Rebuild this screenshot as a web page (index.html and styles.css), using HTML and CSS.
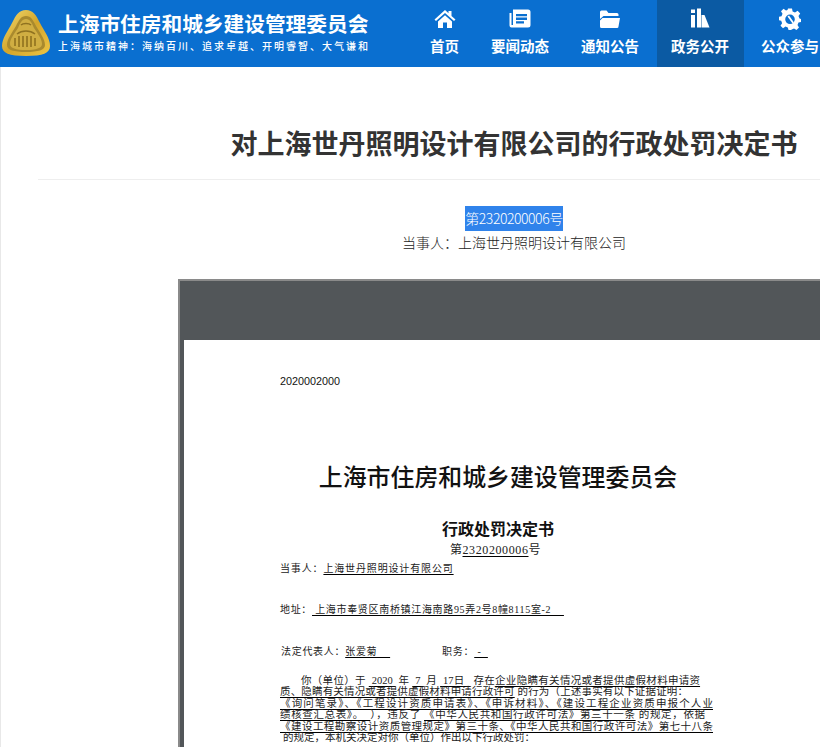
FILE: index.html
```html
<!DOCTYPE html>
<html lang="zh-CN">
<head>
<meta charset="utf-8">
<title>对上海世丹照明设计有限公司的行政处罚决定书</title>
<link rel="stylesheet" href="styles.css">
</head>
<body>
<div class="page">
  <header class="header">
    <div class="brand">
      <svg class="logo" width="50" height="50" viewBox="0 0 50 50">
        <defs>
          <linearGradient id="gold" x1="0" y1="0" x2="1" y2="1">
            <stop offset="0" stop-color="#f3dc72"/>
            <stop offset="0.5" stop-color="#d2a52c"/>
            <stop offset="1" stop-color="#eec544"/>
          </linearGradient>
        </defs>
        <path d="M25 1C32 1 35 6 39 14C43 22 49 29 49 37C49 44 42 47 25 47C8 47 1 44 1 37C1 29 7 22 11 14C15 6 18 1 25 1Z" fill="url(#gold)"/>
        <path d="M25 7C30 7 32 11 35 17C39 24 44 30 44 36C44 41 37 43 25 43C13 43 6 41 6 36C6 30 11 24 15 17C18 11 20 7 25 7Z" fill="#a98a2e"/>
        <path d="M25 10C29 10 31 14 33 19C37 25 41 30 41 35C41 39 35 41 25 41C15 41 9 39 9 35C9 30 13 25 17 19C19 14 21 10 25 10Z" fill="#d0ae42"/>
        <path d="M16 25C21 21 29 21 34 25" fill="none" stroke="#8f7220" stroke-width="1.500"/>
        <path d="M14 37V29M18 38V27M22 38V27M26 38V27M30 38V27M34 37V29" stroke="#87691a" stroke-width="1.400"/>
        <path d="M20 16C22 14 28 14 30 16" fill="none" stroke="#8f7220" stroke-width="1.500"/>
      </svg>
      <div class="brand-text">
        <div class="brand-name">上海市住房和城乡建设管理委员会</div>
        <div class="brand-sub">上海城市精神：海纳百川、追求卓越、开明睿智、大气谦和</div>
      </div>
    </div>
    <nav class="nav">
      <a class="nav-item">
        <svg class="nav-icon" width="24" height="24" viewBox="0 0 24 24"><path d="M12 3L1.500 12.500L3 14L12 6L21 14L22.500 12.500L18.500 9V4H15.500V6.300Z M5 14.500L12 8.300L19 14.500V21H14V15.500H10V21H5Z" fill="#fff"/></svg>
        <span>首页</span>
      </a>
      <a class="nav-item">
        <svg class="nav-icon" width="24" height="24" viewBox="0 0 24 24"><path d="M5 2.500H20A2.500 2.500 0 0 1 22.500 5V18A2.500 2.500 0 0 1 20 20.500H3.500A2 2 0 0 1 1.500 18.500V6H3.500V18H5Z" fill="#fff"/><path d="M8 7H19V9.300H8ZM8 10.600H19V12.900H8ZM8 14.200H16V16.500H8Z" fill="#0a6fd0"/></svg>
        <span>要闻动态</span>
      </a>
      <a class="nav-item">
        <svg class="nav-icon" width="24" height="24" viewBox="0 0 24 24"><path d="M2 5A1.500 1.500 0 0 1 3.500 3.500H8.500L10.500 6H19A1.500 1.500 0 0 1 20.500 7.500V9H5.500L2 12Z" fill="#fff"/><path d="M4.500 11H22L20.500 19.500A1.500 1.500 0 0 1 19 21H3.500A1.500 1.500 0 0 1 2 19.500V13.500Z" fill="#fff"/></svg>
        <span>通知公告</span>
      </a>
      <a class="nav-item nav-item-active">
        <svg class="nav-icon" width="24" height="24" viewBox="0 0 24 24"><path d="M3 2.500H7V6H3ZM3 8H7V20.500H3ZM9 1.500H13V20.500H9Z" fill="#fff"/><path d="M13.500 8H16.500L21.500 20.500H13.500Z" fill="#fff"/></svg>
        <span>政务公开</span>
      </a>
      <a class="nav-item">
        <svg class="nav-icon" width="24" height="24" viewBox="0 0 24 24"><path fill-rule="evenodd" d="M10 1.500H14L14.600 4.500L17 5.500L19.600 3.800L22.200 6.400L20.500 9L21.500 11.500L23 12V15L20.500 15.600L19.500 18L21 20.500L18.500 23L16 21.400L13.800 22.400L13 23H10.500L9.800 20.600L7.500 19.600L5 21.200L2.500 18.700L4.100 16.200L3.200 13.800L1 13.200V9.800L3.500 9.200L4.500 6.800L3 4.300L5.500 1.800L8 3.400L9.500 3Z M12 7.500A4.800 4.800 0 1 0 12 17.100A4.800 4.800 0 1 0 12 7.500Z" fill="#fff"/><path d="M9.500 9.500L11 8.500L16 15.500L14.500 16.500Z" fill="#fff"/></svg>
        <span>公众参与</span>
      </a>
    </nav>
  </header>
  <main class="main">
    <h1 class="title">对上海世丹照明设计有限公司的行政处罚决定书</h1>
    <div class="doc-no"><span class="selected">第2320200006号</span></div>
    <div class="party">当事人：上海世丹照明设计有限公司</div>
    <section class="viewer">
      <div class="sheet">
        <div class="serial">2020002000</div>
        <div class="org">上海市住房和城乡建设管理委员会</div>
        <div class="doc-title">行政处罚决定书</div>
        <div class="doc-num">第<u>2320200006</u>号</div>
        <div class="row row-party">当事人：<u>上海世丹照明设计有限公司</u></div>
        <div class="row row-addr">地址：<u>&nbsp;上海市奉贤区南桥镇江海南路95弄2号8幢8115室-2&nbsp;&nbsp;&nbsp;&nbsp;</u></div>
        <div class="row row-legal"><span>法定代表人：<u>张爱菊&nbsp;&nbsp;&nbsp;&nbsp;</u></span><span class="duty">职务：<u>&nbsp;-&nbsp;&nbsp;</u></span></div>
        <div class="body">
          <div class="line line-1">你（单位）于 <u>&nbsp;2020&nbsp;</u> 年 <u>&nbsp;7&nbsp;</u> 月 <u>&nbsp;17日&nbsp;&nbsp;</u> 存在<u>企业隐瞒有关情况或者提供虚假材料申请资</u></div>
          <div class="line line-2"><u>质、隐瞒有关情况或者提供虚假材料申请行政许可</u> 的行为（上述事实有以下证据证明：</div>
          <div class="line line-3"><u>《询问笔录》、《工程设计资质申请表》、《申诉材料》、《建设工程企业资质申报个人业</u></div>
          <div class="line line-4"><u>绩核查汇总表》。&nbsp;&nbsp;</u>），违反了 <u>《中华人民共和国行政许可法》第三十一条</u> 的规定，依据</div>
          <div class="line line-5"><u>《建设工程勘察设计资质管理规定》第三十条、《中华人民共和国行政许可法》第七十八条</u></div>
          <div class="line line-6">的规定，本机关决定对你（单位）作出以下行政处罚：</div>
        </div>
      </div>
    </section>
  </main>
</div>
</body>
</html>
```

FILE: styles.css
```css
* { box-sizing: border-box; }
html, body { margin: 0; padding: 0; }
body { background: #fff; font-family: "Noto Sans CJK SC", sans-serif; color: #333; }
.page { width: 820px; height: 747px; overflow: hidden; box-shadow: inset 1px 0 0 #e8e8e8; }

.header { height: 67px; width: 940px; background: #0a6fd0; display: flex; color: #fff; }
.brand { width: 415.5px; display: flex; flex: none; }
.logo { margin: 9px 0 0 1px; flex: none; }
.brand-text { margin-left: 7px; width: 310px; padding-top: 8px; }
.brand-name { font-size: 20.7px; line-height: 30px; font-weight: 700; white-space: nowrap; }
.brand-sub { font-size: 10px; line-height: 16px; text-align-last: justify; white-space: nowrap; font-weight: 500; }
.nav { display: flex; gap: 3px; }
.nav-item { display: flex; flex-direction: column; align-items: center; padding: 7px 14.5px 0; height: 67px; font-size: 14.5px; font-weight: 700; line-height: 20px; white-space: nowrap; }
.nav-item span { margin-top: 5px; }
.nav-item-active { background: #0b5aa3; }
.nav-icon { display: block; flex: none; }

.main { margin-left: 38px; width: 952px; }
.title { margin: 0; padding: 56px 0 16px; font-size: 27px; line-height: 40px; font-weight: 700; text-align: center; color: #333; border-bottom: 1px solid #eee; }
.doc-no { margin-top: 26px; font-size: 14px; line-height: 25px; height: 25px; text-align: center; font-weight: 300; letter-spacing: -0.45px; }
.selected { display: inline-block; background: #3083eb; color: #fff; height: 25px; line-height: 24px; }
.party { font-size: 14px; line-height: 22px; text-align: center; font-weight: 300; color: #222; }

.viewer { width: 672px; height: 600px; margin: 26px auto 0; padding: 59px 0 0 4px; background: #525659; border-top: 2px solid #8a8a8a; border-left: 2px solid #8a8a8a; }
.sheet { background: #fff; width: 640px; height: 600px; padding: 34px 0 0 96px; color: #222; font-family: "Liberation Serif", "Noto Sans CJK SC", serif; }
.sheet u { text-decoration-thickness: 1px; text-underline-offset: 1.5px; text-decoration-color: #000; }
.serial { font-family: "Liberation Sans", sans-serif; font-size: 10.8px; line-height: 14px; color: #111; }
.org { width: 436px; margin-top: 74px; font-size: 23.9px; line-height: 32px; font-weight: 500; text-align: center; color: #111; }
.doc-title { width: 436px; margin-top: 26px; font-size: 16px; line-height: 20px; font-weight: 700; text-align: center; color: #111; }
.doc-num { width: 436px; margin-top: 2px; font-size: 12px; line-height: 16px; text-align: center; letter-spacing: 0.6px; padding-right: 5px; }
.row { font-size: 10px; line-height: 14px; width: 436px; }
.row-party { margin-top: 4px; letter-spacing: 0.85px; }
.row-addr { margin-top: 27px; letter-spacing: 0.67px; }
.row-legal { margin-top: 28px; padding-left: 1px; display: flex; letter-spacing: 0.7px; }
.duty { margin-left: 52px; }
.body { margin-top: 16px; font-size: 10.5px; line-height: 11.4px; }
.line { white-space: nowrap; text-align-last: justify; }
.line-1 { width: 420px; padding-left: 21px; }
.line-2 { width: 408px; }
.line-3 { width: 433px; }
.line-4 { width: 425px; }
.line-5 { width: 433px; }
.line-6 { width: 433px; padding-left: 3px; text-align-last: left; }
```
